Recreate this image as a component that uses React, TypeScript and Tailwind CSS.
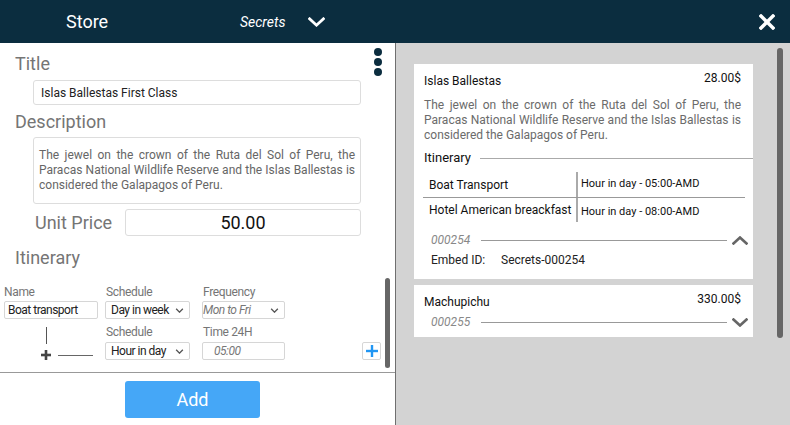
import React from "react";

const Chevron = ({ up = false, className = "" }: { up?: boolean; className?: string }) => (
  <svg viewBox="0 0 16 9" className={className} fill="none" stroke="currentColor" strokeWidth="2.6" strokeLinecap="square">
    {up ? <polyline points="1.5,7.5 8,1.5 14.5,7.5" /> : <polyline points="1.5,1.5 8,7.5 14.5,1.5" />}
  </svg>
);

const SmallChevron = () => (
  <svg viewBox="0 0 10 6" className="w-[9px] h-[5px] text-[#555]" fill="none" stroke="currentColor" strokeWidth="1.6">
    <polyline points="1,1 5,5 9,1" />
  </svg>
);

const Select = ({ value, italic = false, pad = true }: { value: string; italic?: boolean; pad?: boolean }) => (
  <div className={`h-[18px] w-full border border-[#d6d6d6] rounded-[2px] flex items-center justify-between ${pad ? "pl-[5px]" : "pl-0"} pr-[5px]`}>
    <span className={`text-[12px] tracking-[-0.5px] leading-none whitespace-nowrap ${italic ? "italic text-[#777]" : "text-[#222]"}`}>{value}</span>
    <SmallChevron />
  </div>
);

const desc = "The jewel on the crown of the Ruta del Sol of Peru, the Paracas National Wildlife Reserve and the Islas Ballestas is considered the Galapagos of Peru.";

export default function App() {
  return (
    <div className="w-[790px] h-[425px] flex flex-col overflow-hidden" style={{ fontFamily: "Roboto, 'Liberation Sans', sans-serif" }}>
      {/* Header */}
      <div className="h-[43px] bg-[#0b2d3f] flex items-center text-white shrink-0">
        <div className="w-[240px] pl-[66px] text-[18px] leading-none">Store</div>
        <div className="text-[14px] italic leading-none">Secrets</div>
        <Chevron className="ml-[22px] w-[17px] h-[10px] text-white" />
        <svg viewBox="0 0 16 16" className="ml-auto mr-[15px] w-[16px] h-[16px]" stroke="white" strokeWidth="3.4" strokeLinecap="square">
          <line x1="2" y1="2" x2="14" y2="14" />
          <line x1="14" y1="2" x2="2" y2="14" />
        </svg>
      </div>

      <div className="flex flex-1 min-h-0">
        {/* Left panel */}
        <div className="w-[396px] border-r border-[#6f6f6f] bg-white flex flex-col shrink-0">
          <div className="relative h-[329px] pt-[10px] overflow-hidden">
            <div className="absolute left-[374px] top-[5px] flex flex-col gap-[2px]">
              <div className="w-[8px] h-[8px] rounded-full bg-[#0b2d3f]" />
              <div className="w-[8px] h-[8px] rounded-full bg-[#0b2d3f]" />
              <div className="w-[8px] h-[8px] rounded-full bg-[#0b2d3f]" />
            </div>
            <div className="absolute left-[385px] top-[235px] w-[5px] h-[90px] rounded-full bg-[#666]" />

            <div className="pl-[15px] text-[18px] leading-[22px] text-[#757575]">Title</div>
            <div className="ml-[33px] mt-[5px] w-[328px] h-[25px] border border-[#ddd] rounded-[3px] flex items-center pl-[7px] text-[12px] text-[#222]">
              Islas Ballestas First Class
            </div>
            <div className="pl-[15px] mt-[6px] text-[18px] leading-[22px] text-[#757575]">Description</div>
            <div className="ml-[33px] mt-[4px] w-[328px] h-[67px] border border-[#ddd] rounded-[3px] px-[5px] pt-[10px] text-[12px] leading-[15px] text-[#666] text-justify">
              {desc}
            </div>
            <div className="mt-[5px] flex items-center h-[27px]">
              <div className="w-[125px] pl-[35px] text-[18px] leading-none text-[#757575]">Unit Price</div>
              <div className="w-[236px] h-[27px] border border-[#ddd] rounded-[3px] flex items-center justify-center text-[18px] text-[#111]">50.00</div>
            </div>
            <div className="pl-[15px] mt-[11px] text-[18px] leading-[22px] text-[#757575]">Itinerary</div>

            {/* Row 1 */}
            <div className="mt-[16px] flex">
              <div className="ml-[4px] w-[94px] flex flex-col">
                <div className="text-[12px] tracking-[-0.35px] leading-[14px] text-[#757575]">Name</div>
                <div className="mt-[2px] h-[18px] border border-[#d6d6d6] rounded-[2px] flex items-center pl-[3px] text-[12px] tracking-[-0.5px] leading-none text-[#222] whitespace-nowrap">Boat transport</div>
              </div>
              <div className="ml-[7px] w-[85px] flex flex-col">
                <div className="text-[12px] tracking-[-0.35px] leading-[14px] text-[#757575] pl-[1px]">Schedule</div>
                <div className="mt-[2px]"><Select value="Day in week" /></div>
              </div>
              <div className="ml-[12px] w-[83px] flex flex-col">
                <div className="text-[12px] tracking-[-0.35px] leading-[14px] text-[#757575] pl-[1px]">Frequency</div>
                <div className="mt-[2px]"><Select value="Mon to Fri" italic pad={false} /></div>
              </div>
            </div>

            {/* Row 2 */}
            <div className="mt-[6px] flex items-end">
              <div className="w-[105px] flex flex-col">
                <div className="ml-[46px] w-px h-[17px] bg-[#555]" />
                <div className="mt-[6px] flex items-center h-[10px]">
                  <svg viewBox="0 0 10 10" className="ml-[41px] w-[10px] h-[10px]" stroke="#444" strokeWidth="2.6">
                    <line x1="5" y1="0" x2="5" y2="10" />
                    <line x1="0" y1="5" x2="10" y2="5" />
                  </svg>
                  <div className="ml-[7px] w-[35px] h-px bg-[#666]" />
                </div>
              </div>
              <div className="w-[85px] flex flex-col">
                <div className="text-[12px] tracking-[-0.35px] leading-[14px] text-[#757575] pl-[1px]">Schedule</div>
                <div className="mt-[3px]"><Select value="Hour in day" /></div>
              </div>
              <div className="ml-[12px] w-[83px] flex flex-col">
                <div className="text-[12px] tracking-[-0.35px] leading-[14px] text-[#757575] pl-[1px]">Time 24H</div>
                <div className="mt-[3px] h-[18px] border border-[#d6d6d6] rounded-[2px] flex items-center pl-[11px] text-[12px] tracking-[-0.5px] leading-none italic text-[#777]">05:00</div>
              </div>
              <div className="ml-auto mr-[14px] w-[19px] h-[18px] border border-[#d6d6d6] rounded-[2px] flex items-center justify-center">
                <svg viewBox="0 0 12 12" className="w-[12px] h-[12px]" stroke="#2196f3" strokeWidth="2.4">
                  <line x1="6" y1="0" x2="6" y2="12" />
                  <line x1="0" y1="6" x2="12" y2="6" />
                </svg>
              </div>
            </div>
          </div>
          <div className="flex-1 border-t border-[#999] pt-[8px] pl-[125px]">
            <div className="w-[135px] h-[37px] bg-[#45a7f7] rounded-[3px] flex items-center justify-center text-white text-[18px]">Add</div>
          </div>
        </div>

        {/* Right panel */}
        <div className="relative flex-1 bg-[#d3d3d3] pl-[18px] pt-[21px]">
          <div className="absolute left-[381px] top-[5px] w-[6px] h-[290px] rounded-full bg-[#666]" />

          {/* Card 1 */}
          <div className="w-[339px] bg-white pl-[10px] pr-[12px] pt-[6px] pb-[12px]">
            <div className="flex justify-between items-start">
              <div className="mt-[3px] text-[12px] leading-[16px] text-[#111]">Islas Ballestas</div>
              <div className="text-[12px] leading-[16px] text-[#111]">28.00$</div>
            </div>
            <div className="mt-[9px] text-[12px] leading-[15px] text-[#6b6b6b] text-justify">{desc}</div>
            <div className="mt-[7px] flex items-center mr-[-12px]">
              <div className="text-[13px] leading-[16px] text-[#111]">Itinerary</div>
              <div className="ml-[9px] flex-1 h-px bg-[#aaa]" />
            </div>
            <div className="mt-[6px] ml-[-1px] w-[322px] flex flex-col">
              <div className="flex h-[26px] border-b border-[#999]">
                <div className="w-[155px] border-r-2 border-[#aaa] pl-[6px] flex items-center text-[12px] text-[#111]">Boat Transport</div>
                <div className="pl-[3px] flex items-center text-[11px] text-[#111]">Hour in day - 05:00-AMD</div>
              </div>
              <div className="flex h-[24px]">
                <div className="w-[155px] border-r-2 border-[#aaa] pl-[6px] flex items-center text-[12px] text-[#111] whitespace-nowrap">Hotel American breackfast</div>
                <div className="pl-[3px] pt-[7px] text-[11px] leading-[13px] text-[#111]">Hour in day - 08:00-AMD</div>
              </div>
            </div>
            <div className="mt-[11px] flex items-center mr-[-7px] pl-[7px]">
              <div className="text-[12px] leading-[14px] italic text-[#888]">000254</div>
              <div className="ml-[11px] flex-1 h-px bg-[#999]" />
              <Chevron up className="ml-[5px] w-[16px] h-[9px] text-[#666]" />
            </div>
            <div className="mt-[6px] flex pl-[7px] text-[12px] leading-[14px] text-[#222]">
              <div className="w-[70px]">Embed ID:</div>
              <div>Secrets-000254</div>
            </div>
          </div>

          {/* Card 2 */}
          <div className="mt-[6px] w-[339px] bg-white pl-[10px] pr-[12px] pt-[6px] pb-[8px]">
            <div className="flex justify-between items-start">
              <div className="mt-[3px] text-[12px] leading-[16px] text-[#111]">Machupichu</div>
              <div className="text-[12px] leading-[16px] text-[#111]">330.00$</div>
            </div>
            <div className="mt-[5px] flex items-center mr-[-7px] pl-[7px]">
              <div className="text-[12px] leading-[14px] italic text-[#888]">000255</div>
              <div className="ml-[11px] flex-1 h-px bg-[#999]" />
              <Chevron className="ml-[5px] w-[16px] h-[9px] text-[#666]" />
            </div>
          </div>
        </div>
      </div>
    </div>
  );
}
